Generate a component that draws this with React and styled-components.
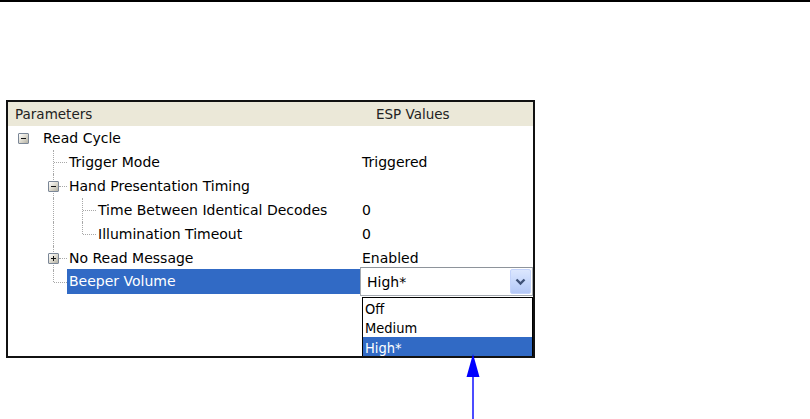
import styled, { createGlobalStyle } from "styled-components";

const GlobalStyle = createGlobalStyle`
  body {
    margin: 0;
    background: #fff;
    font-family: "DejaVu Sans", "Liberation Sans", sans-serif;
  }
`;

const rows = [
  { name: "Read Cycle", root: true },
  { name: "Trigger Mode", value: "Triggered", guides: [{ w: 20, branch: true }] },
  {
    name: "Hand Presentation Timing",
    guides: [{ w: 20, branch: true, box: "open" }],
  },
  {
    name: "Time Between Identical Decodes",
    value: "0",
    guides: [{ w: 29 }, { w: 20, branch: true }],
  },
  {
    name: "Illumination Timeout",
    value: "0",
    guides: [{ w: 29 }, { w: 20, branch: true, last: true }],
  },
  {
    name: "No Read Message",
    value: "Enabled",
    guides: [{ w: 20, branch: true, box: "closed" }],
  },
  {
    name: "Beeper Volume",
    selected: true,
    guides: [{ w: 20, branch: true, last: true }],
  },
];

const options = ["Off", "Medium", "High*"];

export default function App() {
  return (
    <>
      <GlobalStyle />
      <Page>
        <TopRule />
        <Panel>
          <Header>
            <HeadCell>Parameters</HeadCell>
            <HeadCell $value>ESP Values</HeadCell>
          </Header>
          {rows.map((row) => (
            <Row key={row.name}>
              <NameCell>
                {row.root ? (
                  <>
                    <RootBox>
                      <Expander $open />
                    </RootBox>
                    <Label>{row.name}</Label>
                  </>
                ) : (
                  <>
                    <Lead />
                    {row.guides.map((g, i) => (
                      <Guide key={i} $w={g.w} $branch={g.branch} $last={g.last} $box={!!g.box}>
                        {g.box && (
                          <BoxSlot>
                            <Expander $open={g.box === "open"} />
                          </BoxSlot>
                        )}
                      </Guide>
                    ))}
                    <Label $selected={row.selected}>{row.name}</Label>
                  </>
                )}
              </NameCell>
              <ValueCell>
                {row.selected ? (
                  <Combo>
                    <ComboText>High*</ComboText>
                    <DropButton>
                      <svg width="11" height="8" viewBox="0 0 11 8">
                        <path d="M1.5 1.5 L5.5 5.5 L9.5 1.5" fill="none" stroke="#3f5277" strokeWidth="2.4" />
                      </svg>
                    </DropButton>
                    <List>
                      {options.map((o) => (
                        <Option key={o} $active={o === "High*"}>
                          {o}
                        </Option>
                      ))}
                    </List>
                  </Combo>
                ) : (
                  row.value
                )}
              </ValueCell>
            </Row>
          ))}
        </Panel>
        <Pointer>
          <svg width="14" height="65" viewBox="0 0 14 65">
            <path d="M7 0 L13.5 23 L0.5 23 Z" fill="#0000ff" />
            <rect x="6.3" y="22" width="1.4" height="43" fill="#0000ff" />
          </svg>
        </Pointer>
      </Page>
    </>
  );
}

const Page = styled.div`
  width: 810px;
  height: 419px;
  overflow: hidden;
  position: relative;
`;

const TopRule = styled.div`
  border-top: 2px solid #000;
`;

const Panel = styled.div`
  margin: 98px 0 0 6px;
  width: 529px;
  height: 258px;
  box-sizing: border-box;
  border: 2px solid #111;
  font-size: 14px;
  color: #000;
`;

const Header = styled.div`
  display: grid;
  grid-template-columns: 352px 1fr;
  height: 24px;
  background: #ebe8d8;
  align-items: center;
`;

const HeadCell = styled.div`
  padding-left: ${(p) => (p.$value ? "16px" : "7px")};
  color: #222;
  font-size: 13.5px;
`;

const Row = styled.div`
  display: grid;
  grid-template-columns: 352px 1fr;
  height: 24px;
  line-height: 24px;
`;

const NameCell = styled.div`
  display: flex;
  align-items: stretch;
  height: 24px;
`;

const RootBox = styled.span`
  flex: none;
  display: flex;
  align-items: center;
  margin-left: 10px;
  margin-right: 13px;
`;

const Lead = styled.span`
  flex: none;
  width: 40px;
`;

const Guide = styled.span`
  position: relative;
  flex: none;
  width: ${(p) => p.$w}px;

  &::before {
    content: "";
    position: absolute;
    left: 5px;
    top: 0;
    bottom: ${(p) => (p.$last ? "12px" : "0")};
    border-left: 1px dotted #a8a8a8;
  }

  &::after {
    content: ${(p) => (p.$branch ? '""' : "none")};
    position: absolute;
    left: ${(p) => (p.$box ? "11px" : "6px")};
    right: 1px;
    top: 12px;
    border-top: 1px dotted #a8a8a8;
  }
`;

const BoxSlot = styled.span`
  position: absolute;
  left: 0;
  top: 7px;
  z-index: 1;
`;

const Expander = styled.span`
  position: relative;
  display: block;
  width: 11px;
  height: 11px;
  box-sizing: border-box;
  border: 1px solid #7b8797;
  border-radius: 1px;
  background: linear-gradient(135deg, #ffffff 0%, #dedbd0 50%, #b4b1a4 100%);

  &::before {
    content: "";
    position: absolute;
    left: 2px;
    right: 2px;
    top: 4px;
    height: 1px;
    background: #111;
  }

  &::after {
    content: ${(p) => (p.$open ? "none" : '""')};
    position: absolute;
    top: 2px;
    bottom: 2px;
    left: 4px;
    width: 1px;
    background: #111;
  }
`;

const Label = styled.span`
  padding-left: 1px;
  white-space: nowrap;
  ${(p) =>
    p.$selected &&
    `
    flex: 1;
    background: #316ac5;
    color: #fff;
    margin-left: -1px;
    padding-left: 2px;
    margin-top: -1px;
  `}
`;

const ValueCell = styled.div`
  position: relative;
  padding-left: 2px;
  white-space: nowrap;
`;

const Combo = styled.div`
  position: absolute;
  left: 0;
  right: 0;
  top: -3px;
  height: 29px;
  box-sizing: border-box;
  border: 1px solid #a3a9b0;
  border-top-color: #8e949b;
  background: #fff;
  display: flex;
  align-items: center;
  padding-left: 6px;
`;

const ComboText = styled.span`
  line-height: 1;
`;

const DropButton = styled.span`
  position: absolute;
  right: 1px;
  top: 1px;
  bottom: 1px;
  width: 21px;
  box-sizing: border-box;
  border: 1px solid #c3d3fb;
  border-radius: 2px;
  background: linear-gradient(180deg, #dce7fe 0%, #c3d5fb 60%, #b4c8f6 100%);
  display: flex;
  align-items: center;
  justify-content: center;
`;

const List = styled.div`
  position: absolute;
  top: calc(100% + 2px);
  left: 1px;
  right: -1px;
  border: 1px solid #000;
  border-bottom: none;
  background: #fff;
  z-index: 3;
`;

const Option = styled.div`
  height: 19px;
  line-height: 22px;
  padding-left: 2px;
  font-family: "DejaVu Sans Condensed", "DejaVu Sans", sans-serif;
  font-size: 14.5px;
  overflow: hidden;
  background: ${(p) => (p.$active ? "#316ac5" : "#fff")};
  color: ${(p) => (p.$active ? "#fff" : "#000")};
  margin-top: ${(p) => (p.$active ? "1px" : "0")};
`;

const Pointer = styled.div`
  position: relative;
  z-index: 5;
  margin: -4px 0 0 466px;
  width: 14px;
  line-height: 0;
`;
